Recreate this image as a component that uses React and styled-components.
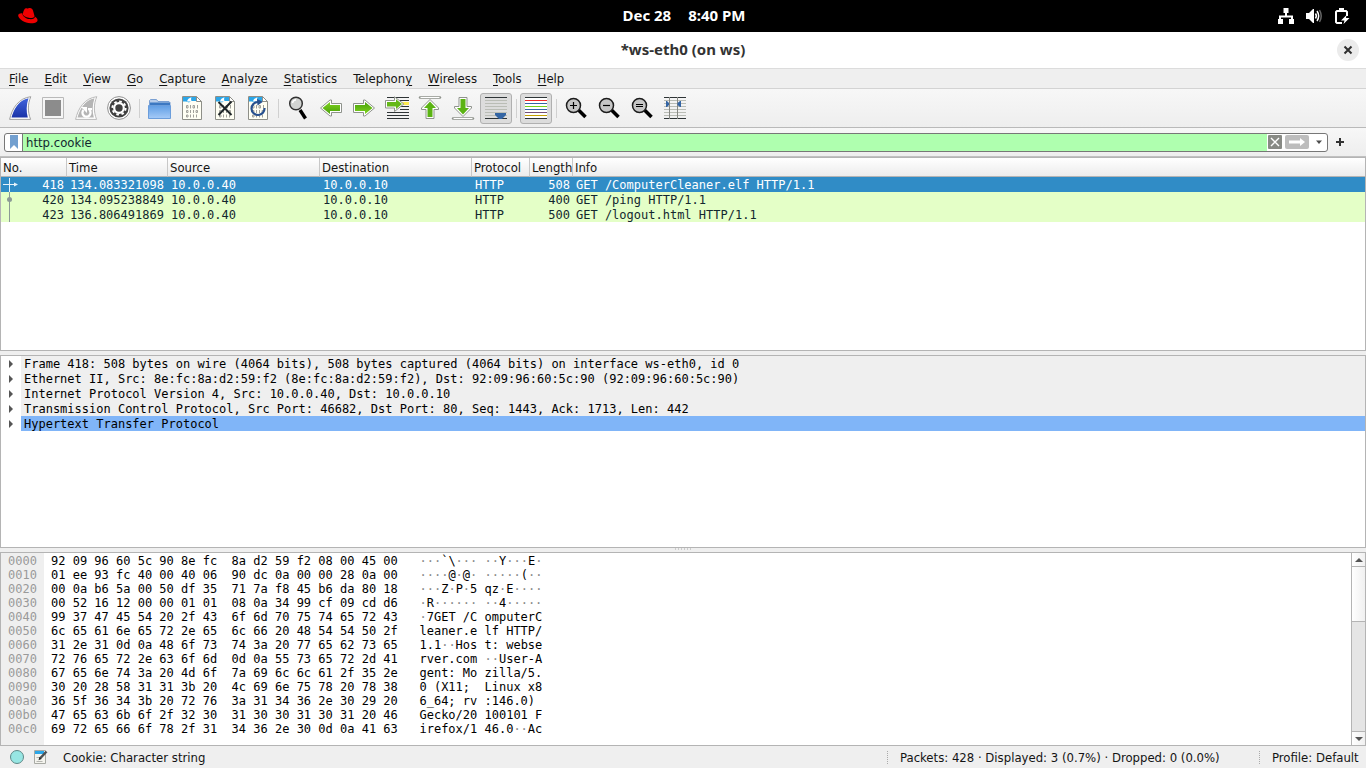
import React, { useState } from "react";
import styled, { createGlobalStyle, css } from "styled-components";

const menus = [
  ["", "F", "ile"],
  ["", "E", "dit"],
  ["", "V", "iew"],
  ["", "G", "o"],
  ["", "C", "apture"],
  ["", "A", "nalyze"],
  ["", "S", "tatistics"],
  ["Telephon", "y", ""],
  ["", "W", "ireless"],
  ["", "T", "ools"],
  ["", "H", "elp"],
];

const packets = [
  {
    no: 418,
    time: "134.083321098",
    length: 508,
    info: "GET /ComputerCleaner.elf HTTP/1.1",
    mark: "request",
  },
  {
    no: 420,
    time: "134.095238849",
    length: 400,
    info: "GET /ping HTTP/1.1",
    mark: "related",
  },
  {
    no: 423,
    time: "136.806491869",
    length: 500,
    info: "GET /logout.html HTTP/1.1",
    mark: "line",
  },
];

const details = [
  "Frame 418: 508 bytes on wire (4064 bits), 508 bytes captured (4064 bits) on interface ws-eth0, id 0",
  "Ethernet II, Src: 8e:fc:8a:d2:59:f2 (8e:fc:8a:d2:59:f2), Dst: 92:09:96:60:5c:90 (92:09:96:60:5c:90)",
  "Internet Protocol Version 4, Src: 10.0.0.40, Dst: 10.0.0.10",
  "Transmission Control Protocol, Src Port: 46682, Dst Port: 80, Seq: 1443, Ack: 1713, Len: 442",
  "Hypertext Transfer Protocol",
];

const dump = [
  "92 09 96 60 5c 90 8e fc 8a d2 59 f2 08 00 45 00",
  "01 ee 93 fc 40 00 40 06 90 dc 0a 00 00 28 0a 00",
  "00 0a b6 5a 00 50 df 35 71 7a f8 45 b6 da 80 18",
  "00 52 16 12 00 00 01 01 08 0a 34 99 cf 09 cd d6",
  "99 37 47 45 54 20 2f 43 6f 6d 70 75 74 65 72 43",
  "6c 65 61 6e 65 72 2e 65 6c 66 20 48 54 54 50 2f",
  "31 2e 31 0d 0a 48 6f 73 74 3a 20 77 65 62 73 65",
  "72 76 65 72 2e 63 6f 6d 0d 0a 55 73 65 72 2d 41",
  "67 65 6e 74 3a 20 4d 6f 7a 69 6c 6c 61 2f 35 2e",
  "30 20 28 58 31 31 3b 20 4c 69 6e 75 78 20 78 38",
  "36 5f 36 34 3b 20 72 76 3a 31 34 36 2e 30 29 20",
  "47 65 63 6b 6f 2f 32 30 31 30 30 31 30 31 20 46",
  "69 72 65 66 6f 78 2f 31 34 36 2e 30 0d 0a 41 63",
];

const toAscii = (bytes) =>
  bytes
    .map((b) => parseInt(b, 16))
    .map((n) => (n >= 32 && n < 127 ? String.fromCharCode(n) : "·"))
    .join("");

const Svg = ({ size = 24, children, ...rest }) => (
  <svg
    width={size}
    height={size}
    viewBox={`0 0 ${size} ${size}`}
    fill="none"
    aria-hidden="true"
    {...rest}
  >
    {children}
  </svg>
);

const Fin = ({ grey }) => (
  <Svg>
    <path
      d="M1.6 23.4C4 12.5 10.5 2 22.8.7 19.6 8 19.6 16 22.6 23.4Z"
      fill="#fff"
      stroke={grey ? "#b9b9b9" : "#a0a0a0"}
    />
    <path
      d="M3.500 21.400C6 12.500 11 4 20.500 2.200 18.200 9 18.200 15.500 19.800 21.400Z"
      fill={grey ? "#b5b5b5" : "url(#fin)"}
    />
    {grey ? (
      <>
        <path
          d="M9.500 12.500A4 4 0 1 0 15.500 12.500"
          stroke="#fff"
          strokeWidth="2.400"
          transform="translate(0 1.500)"
        />
        <path d="M7 11h6v6zM14 12h4v2.200h-4z" fill="#fff" />
      </>
    ) : (
      <defs>
        <linearGradient id="fin" x1="0" y1="0" x2="0" y2="1">
          <stop stopColor="#4063dc" />
          <stop offset="1" stopColor="#1a33a8" />
        </linearGradient>
      </defs>
    )}
  </Svg>
);

const Stop = () => (
  <Svg>
    <path d="M1.5 1.5h21v21h-21z" fill="#f6f6f6" stroke="#b9b9b9" />
    <path d="M4 4h16v16H4z" fill="#8c8c8c" />
  </Svg>
);

const Gear = () => (
  <Svg>
    <circle cx="12" cy="12" r="11.400" fill="#fff" stroke="#8f8f8f" />
    <circle cx="12" cy="12" r="9.600" fill="#404040" />
    <circle cx="12" cy="12" r="4.800" stroke="#fff" strokeWidth="2.200" />
    <circle
      cx="12"
      cy="12"
      r="6.600"
      stroke="#fff"
      strokeWidth="2"
      strokeDasharray="2.600 2.580"
    />
  </Svg>
);

const Folder = () => (
  <Svg>
    <defs>
      <linearGradient id="folder" x1="0" y1="0" x2="0" y2="1">
        <stop stopColor="#5f9de4" />
        <stop offset="1" stopColor="#a5caf7" />
      </linearGradient>
    </defs>
    <g transform="translate(1 0)">
      <path d="M1.500 7V4.500l1-1h6l1.500 2h11l1 1V9h-20.500z" fill="#b8cdea" stroke="#7ba0d2" />
      <path d="M2 6.500h20v3H2z" fill="#3c78c2" />
      <path d="M.5 9.500h22v13H.5z" fill="url(#folder)" stroke="#6b9ddb" />
    </g>
  </Svg>
);

const CaptureFile = ({ kind }) => (
  <Svg>
    <g transform="translate(1 0)">
      <path d="M1.500.500h14l5 5v18h-19z" fill="#fffff4" stroke="#8e8f88" />
      <path d="M2 1h13.300l2 4H10l-2 1.500L5 5.500H2z" fill="#2ba6e8" />
      <path d="M6 5.500C6.500 3.500 8 2 10.500 1.300 9.800 3 10 4.500 10.800 5.500z" fill="#fff" />
      <path d="M15.500.500v5h5z" fill="#fff" stroke="#8e8f88" />
      <path
        d="M5.500 9.500h1.500v2.500H5.500zM9.500 9v3.500M12 9.500h1.500v2.500H12zM16.500 9v3.500M5.500 14.500h1.500v2H5.500zM9.500 14v3M12.500 14v3M15 14.500h1.500v2H15zM5.500 19h1.500v2H5.500zM9.500 18.500v3M12.500 18.500v3M15.500 18.500v3"
        stroke="#a0a09a"
      />
      {kind === "close" && (
        <path d="M4.500 6l13 13M17.500 5.500l-13 13.500" stroke="#1f2629" strokeWidth="2" />
      )}
      {kind === "reload" && (
        <>
          <path
            d="M11 6A6.500 6.500 0 1 0 17.500 12"
            stroke="#27508e"
            strokeWidth="2.200"
          />
          <path d="M10 3l6 2.800-5.500 3.700z" fill="#27508e" />
        </>
      )}
    </g>
  </Svg>
);

const Magnifier = () => (
  <Svg>
    <path d="M14 14l5.500 8.500" stroke="#000" strokeWidth="3.400" />
    <circle cx="10" cy="7.500" r="6.300" fill="#d2d4d2" stroke="#333" strokeWidth="1.500" />
    <path d="M6.500 7c.3-2 1.500-3 3.500-3.300" stroke="#fff" strokeWidth="1.500" />
  </Svg>
);

const Lens = ({ sign }) => (
  <Svg>
    <path d="M14.500 14l7 7" stroke="#000" strokeWidth="3.600" />
    <circle cx="9.500" cy="9.500" r="7" fill="#c6c6c6" stroke="#1c1c1c" strokeWidth="1.500" />
    <path
      d={
        sign === "+"
          ? "M6 9.500h7M9.500 6v7"
          : sign === "-"
          ? "M6 9.500h7"
          : "M6 8.500h7M6 10.500h7"
      }
      stroke="#000"
      strokeWidth="1.200"
    />
  </Svg>
);

const Arrow = ({ turn = 0 }) => (
  <Svg>
    <defs>
      <linearGradient id="arrow" x1="0" y1="0" x2="0" y2="1">
        <stop stopColor="#7fd321" />
        <stop offset="1" stopColor="#4aa00a" />
      </linearGradient>
    </defs>
    <g transform={turn ? `rotate(${turn} 12 12)` : undefined}>
      <path
        d="M22.500 7.500v9h-10v3.500h-1.500L1.500 12l9.500-8h1.500v3.500z"
        fill="#fff"
        stroke="#8f938c"
      />
      <path d="M21 9v6H11v3L3.500 12 11 6v3z" fill="url(#arrow)" />
    </g>
  </Svg>
);

const GoTo = () => (
  <Svg>
    <path
      d="M2 1.500h22M15 4.500h9M2 16.500h22M2 19.500h22M2 22.500h22M15 10.500h9M15 13.500h9"
      stroke="#2e3436"
    />
    <path d="M17 6h7v3h-7z" fill="#fce94f" />
    <path
      d="M.500 4.500h9V.800L18.800 8l-9.300 7.500V12h-9z"
      fill="#fff"
      stroke="#8f938c"
    />
    <path d="M2 6h9V3.200L17 8l-6 5v-2.500H2z" fill="#64b818" />
  </Svg>
);

const EdgeArrow = ({ down }) => (
  <Svg>
    <g transform={down ? "rotate(180 12 12)" : undefined}>
      <path d="M2 1.500h20" stroke="#8f938c" strokeWidth="2.400" strokeLinecap="round" />
      <path d="M2.500 1.500h19" stroke="#fff" />
      <path
        d="M12 3.500L20.500 12v1.500H16v9H8v-9H3.500V12z"
        fill="#fff"
        stroke="#8f938c"
      />
      <path d="M12 5.500l6 6.500h-3.500v9h-5v-9H6z" fill="#5bb313" />
    </g>
  </Svg>
);

const AutoScroll = () => (
  <Svg>
    <path d="M1 1.500h22M1 22.500h22" stroke="#2e3436" />
    <path d="M1 4.500h22M1 7.500h22M1 10.500h22M1 13.500h22M1 16.500h22M1 19.500h22" stroke="#babdb6" />
    <path d="M11 17h11v2l-4 4h-3l-4-4z" fill="#3465a4" />
  </Svg>
);

const Colorize = () => (
  <Svg>
    {["#2e3436", "#ef2929", "#3465a4", "#73d216", "#3465a4", "#75507b", "#c4a000", "#2e3436"].map(
      (c, i) => (
        <React.Fragment key={i}>
          <path d={`M1 ${i * 3 + 1.5}h22`} stroke={c} />
          {i < 7 && <path d={`M1 ${i * 3 + 3}h22`} stroke="#fff" strokeWidth="2" />}
        </React.Fragment>
      )
    )}
  </Svg>
);

const ResizeColumns = () => (
  <Svg>
    <path d="M1 1.500h22M1 22.500h22" stroke="#2e3436" />
    <path d="M1 4.500h22M1 7.500h22M1 10.500h22M1 13.500h22M1 16.500h22M1 19.500h22" stroke="#babdb6" />
    <path d="M6.500 1v22M14.500 1v22" stroke="#888a85" />
    <path d="M3 5h1l2 2v2l-2 2H3zM18 5h-1l-2.500 2v2l2.500 2h1z" fill="#3465a4" />
  </Svg>
);

const toolGroups = [
  [
    ["Start capture", <Fin />],
    ["Stop capture", <Stop />],
    ["Restart capture", <Fin grey />],
    ["Capture options", <Gear />],
  ],
  [
    ["Open file", <Folder />],
    ["Save file", <CaptureFile />],
    ["Close file", <CaptureFile kind="close" />],
    ["Reload file", <CaptureFile kind="reload" />],
  ],
  [
    ["Find packet", <Magnifier />],
    ["Previous packet", <Arrow />],
    ["Next packet", <Arrow turn={180} />],
    ["Go to packet", <GoTo />],
    ["First packet", <EdgeArrow />],
    ["Last packet", <EdgeArrow down />],
    ["Auto scroll", <AutoScroll />, true],
  ],
  [["Colorize", <Colorize />, true]],
  [
    ["Zoom in", <Lens sign="+" />],
    ["Zoom out", <Lens sign="-" />],
    ["Normal size", <Lens sign="=" />],
    ["Resize columns", <ResizeColumns />],
  ],
];

const Marker = ({ mark }) => (
  <svg width="18" height="15" viewBox="0 0 18 15" fill="none" aria-hidden="true">
    {mark === "request" && (
      <>
        <path d="M8.500 1v14M2 7.500h12" stroke="#e6f2fa" />
        <path d="M13 5.500l4 2-4 2z" fill="#e6f2fa" />
      </>
    )}
    {mark === "related" && (
      <>
        <path d="M8.500 0v15" stroke="#8b9a96" />
        <circle cx="8.500" cy="7.500" r="2.500" fill="#8b9a96" />
      </>
    )}
    {mark === "line" && <path d="M8.500 0v15" stroke="#8b9a96" />}
  </svg>
);

const App = () => {
  const [filter, setFilter] = useState("http.cookie");
  return (
    <>
      <GlobalStyle />
      <Desktop>
        <TopBar>
          <Svg size={20}>
            <g transform="translate(0 2)" fill="#e00">
              <path d="M5.400 3.500c.6-1.500 1.200-3.800 3.200-3.300 1 .4 1.700.2 2.700-.2 1.700-.4 3.200.7 3.700 2.500l1.500 5.500c.1 2-3.500 2.300-5.700 1.800-3-.5-5.900-2-6.100-3.800z" />
              <path d="M4.300 5.200C1.500 5 0 6 .2 7.700c.4 3.300 6.500 7.300 12.500 7.500 4.500.2 7.200-1.300 6.800-3.500-.2-1.300-1.300-2.300-2.700-3.200.3 2-2.100 2.900-5.300 2.600-3.800-.4-7.200-3.100-7.200-5.900z" />
            </g>
          </Svg>
          <Clock>
            <span>Dec 28</span>
            <span>8:40 PM</span>
          </Clock>
          <Tray>
            <Svg size={16}>
              <path d="M5.500 0h5v5h-5zM0 11h5v5H0zM11 11h5v5h-5z" fill="#fff" />
              <path d="M8 4v4M2 11V8.500h12V11" stroke="#fff" strokeWidth="2" />
            </Svg>
            <Svg size={16}>
              <path d="M0 5h3l4-4h1v14H7l-4-4H0z" fill="#fff" />
              <path d="M9.500 5.500c1 1.500 1 3.500 0 5M11 3c2 3 2 7 0 10" stroke="#fff" strokeWidth="1.500" />
              <path d="M13.500 2c2 3.500 2 8.500 0 12" stroke="#666" strokeWidth="1.500" />
            </Svg>
            <Svg size={16}>
              <path d="M8 15H3l-1-1V4l1-1h9l1 1v4" stroke="#fff" strokeWidth="2" />
              <path d="M5 0h5v3H5zM12.500 7L7 12.500h3.500l-1 3.500 6-6h-3.500z" fill="#fff" />
            </Svg>
          </Tray>
        </TopBar>
        <TitleBar>
          <h1>*ws-eth0 (on ws)</h1>
          <CloseButton aria-label="Close">
            <Svg size={10}>
              <path d="M1.500 1.500l7 7M8.500 1.500l-7 7" stroke="#2e2e2e" strokeWidth="2" />
            </Svg>
          </CloseButton>
        </TitleBar>
        <MenuBar>
          {menus.map(([before, key, after]) => (
            <button key={before + key + after}>
              {before}
              <u>{key}</u>
              {after}
            </button>
          ))}
        </MenuBar>
        <Toolbar>
          {toolGroups.map((group, i) => (
            <React.Fragment key={i}>
              {i > 0 && <Separator />}
              {group.map(([label, icon, pressed]) => (
                <ToolButton key={label} aria-label={label} $pressed={pressed}>
                  {icon}
                </ToolButton>
              ))}
            </React.Fragment>
          ))}
        </Toolbar>
        <FilterBar>
          <FilterBox>
            <FilterButton $width={18} $divider aria-label="Bookmarks">
              <Svg size={14}>
                <path d="M3 0h8v14l-4-4-4 4z" fill="#729fcf" />
              </Svg>
            </FilterButton>
            <input
              aria-label="Display filter"
              value={filter}
              onChange={(e) => setFilter(e.target.value)}
            />
            <FilterButton $width={16} aria-label="Clear filter" onClick={() => setFilter("")}>
              <Svg size={14}>
                <rect width="14" height="14" rx="1" fill="#888a85" />
                <path d="M3 3l8 8M11 3l-8 8" stroke="#fff" strokeWidth="1.400" />
              </Svg>
            </FilterButton>
            <FilterButton $width={28} aria-label="Apply filter">
              <svg width="24" height="14" viewBox="0 0 24 14" aria-hidden="true">
                <rect width="24" height="14" rx="2" fill="#bdbdbd" />
                <path d="M4 5.500h11V3l5 4-5 4V8.500H4z" fill="#fff" />
              </svg>
            </FilterButton>
            <FilterButton $width={16} aria-label="Recent filters">
              <Svg size={8}>
                <path d="M1 2.500h6l-3 3.500z" fill="#4d4d4d" />
              </Svg>
            </FilterButton>
          </FilterBox>
          <FilterButton $width={24} aria-label="Add filter button">
            <Svg size={8}>
              <path d="M4 0v8M0 4h8" stroke="#333" strokeWidth="2" />
            </Svg>
          </FilterButton>
        </FilterBar>
        <Panels>
          <Panel $grow={194}>
            <PacketTable>
              <colgroup>
                {[66, 101, 152, 152, 58, 43].map((w, i) => (
                  <Col key={i} $width={w} />
                ))}
                <col />
              </colgroup>
              <thead>
                <tr>
                  {["No.", "Time", "Source", "Destination", "Protocol", "Length", "Info"].map(
                    (h) => (
                      <th key={h}>{h}</th>
                    )
                  )}
                </tr>
              </thead>
              <tbody>
                {packets.map((p, i) => (
                  <PacketRow key={p.no} $selected={i === 0}>
                    <MarkedCell>
                      <NumberCell>
                        <Marker mark={p.mark} />
                        <span>{p.no}</span>
                      </NumberCell>
                    </MarkedCell>
                    <td>{p.time}</td>
                    <td>10.0.0.40</td>
                    <td>10.0.0.10</td>
                    <td>HTTP</td>
                    <RightCell>{p.length}</RightCell>
                    <td>{p.info}</td>
                  </PacketRow>
                ))}
              </tbody>
            </PacketTable>
          </Panel>
          <Splitter />
          <Panel $grow={193}>
            <DetailTree>
              {details.map((d, i) => (
                <DetailRow key={d} $selected={i === 4}>
                  <Svg size={8}>
                    <path d="M2 0l4 4-4 4z" fill="#555" />
                  </Svg>
                  <span>{d}</span>
                </DetailRow>
              ))}
            </DetailTree>
          </Panel>
          <Splitter>
            <svg width="18" height="2" viewBox="0 0 18 2" aria-hidden="true">
              <path d="M1 1h17" stroke="#aaa" strokeDasharray="1 2" />
            </svg>
          </Splitter>
          <Panel $grow={194}>
            <HexView>
              <Offsets>
                {dump.map((_, i) => (
                  <HexLine key={i}>{(i * 16).toString(16).padStart(4, "0")}</HexLine>
                ))}
              </Offsets>
              <Bytes>
                {dump.map((line, i) => {
                  const b = line.split(" ");
                  const ascii = `${toAscii(b.slice(0, 8))} ${toAscii(b.slice(8))}`;
                  return (
                    <HexLine key={i}>
                      {`${b.slice(0, 8).join(" ")}  ${b.slice(8).join(" ")}   `}
                      {ascii
                        .split(/(·+)/)
                        .map((s, j) => (s[0] === "·" ? <Dim key={j}>{s}</Dim> : s))}
                    </HexLine>
                  );
                })}
              </Bytes>
              <ScrollBar>
                <ScrollButton aria-label="Scroll up">
                  <Svg size={8}>
                    <path d="M0 6l4-4 4 4z" fill="#555" />
                  </Svg>
                </ScrollButton>
                <Thumb />
                <Track />
                <ScrollButton $last aria-label="Scroll down">
                  <Svg size={8}>
                    <path d="M0 2l4 4 4-4z" fill="#555" />
                  </Svg>
                </ScrollButton>
              </ScrollBar>
            </HexView>
          </Panel>
        </Panels>
        <StatusBar>
          <Svg size={16}>
            <circle cx="8" cy="8" r="6.500" fill="#97e6e3" stroke="#5e8887" />
          </Svg>
          <Svg size={16}>
            <path d="M1.500 1.500h11v13h-11z" fill="#f4f4ee" stroke="#a8aaa4" />
            <path d="M2 2h9v3H2z" fill="#2ba6e8" />
            <path d="M3.500 8.500h5M3.500 12.500h6" stroke="#b5b5b0" />
            <path d="M13.500 2.500L7 9.500" stroke="#4d5052" strokeWidth="2.500" />
            <path d="M6.500 8l2 2-3 1.200z" fill="#222" />
          </Svg>
          <StatusText $grow>Cookie: Character string</StatusText>
          <Grip />
          <StatusText $width={355}>
            Packets: 428 · Displayed: 3 (0.7%) · Dropped: 0 (0.0%)
          </StatusText>
          <Grip />
          <StatusText $width={93}>Profile: Default</StatusText>
        </StatusBar>
      </Desktop>
    </>
  );
};

const GlobalStyle = createGlobalStyle`
  * {
    box-sizing: border-box;
  }
  body {
    margin: 0;
    font: 13px/18px "DejaVu Sans Condensed", "Noto Sans", sans-serif;
    color: #141414;
    background: #efefef;
  }
  button {
    display: flex;
    padding: 0;
    border: 0;
    background: none;
    font: inherit;
    color: inherit;
  }
  svg {
    display: block;
    flex: none;
  }
`;

const mono = css`
  font-family: "DejaVu Sans Mono", monospace;
  font-size: 12px;
`;

const shellFont = css`
  font-family: "Noto Sans", sans-serif;
  font-size: 15px;
  font-weight: 700;
`;

const Desktop = styled.div`
  display: flex;
  flex-direction: column;
  height: 100vh;
`;

const TopBar = styled.header`
  display: grid;
  grid-template-columns: 1fr auto 1fr;
  align-items: center;
  height: 32px;
  padding: 0 16px 0 18px;
  background: #000;
  color: #fff;
`;

const Clock = styled.div`
  ${shellFont}
  display: flex;
  gap: 17px;
  padding-bottom: 2px;
`;

const Tray = styled.div`
  display: flex;
  gap: 12px;
  justify-content: flex-end;
`;

const TitleBar = styled.div`
  display: grid;
  grid-template-columns: 1fr auto 1fr;
  align-items: center;
  height: 37px;
  padding: 0 7px;
  background: #fff;
  border-bottom: 1px solid #dcdcdc;
  h1 {
    ${shellFont}
    grid-column: 2;
    margin: 0;
    padding-bottom: 2px;
    color: #333;
  }
`;

const CloseButton = styled.button`
  justify-self: end;
  align-items: center;
  justify-content: center;
  width: 22px;
  height: 22px;
  border-radius: 50%;
  background: #ebebeb;
`;

const MenuBar = styled.nav`
  display: flex;
  height: 20px;
  padding: 0 1px;
  border-bottom: 1px solid #d3d3d3;
  button {
    display: block;
    padding: 1px 8px 0;
  }
  u {
    text-underline-offset: 2px;
    text-decoration-thickness: 1px;
  }
`;

const Toolbar = styled.div`
  display: flex;
  gap: 1px;
  padding: 4px 4px 3px;
  background: linear-gradient(#f7f7f7, #eee);
  border-bottom: 1px solid #b9b9b9;
`;

const ToolButton = styled.button`
  width: 32px;
  height: 31px;
  padding: 3px 4px;
  ${({ $pressed }) =>
    $pressed &&
    css`
      padding: 2px 3px;
      border: 1px solid #b0b0b0;
      border-radius: 3px;
      background: #dcdcdc;
    `}
`;

const Separator = styled.div`
  width: 6px;
  margin: 6px 0;
  background: linear-gradient(#d0d0d0, #d0d0d0) 3px 0 / 1px 100% no-repeat;
`;

const FilterBar = styled.div`
  display: flex;
  align-items: center;
  height: 29px;
  padding: 0 14px 0 4px;
  background: linear-gradient(#f7f7f7, #eee);
  border-bottom: 1px solid #c0c0c0;
`;

const FilterBox = styled.div`
  display: flex;
  flex: 1;
  height: 19px;
  background: #fff;
  border: 1px solid #777;
  border-radius: 3px;
  input {
    flex: 1;
    min-width: 0;
    padding: 1px 3px 0;
    border: 0;
    outline: 0;
    background: #afffaf;
    font: inherit;
    color: #12272e;
  }
`;

const FilterButton = styled.button`
  flex: none;
  align-items: center;
  justify-content: center;
  width: ${({ $width }) => $width}px;
  border-right: ${({ $divider }) => ($divider ? "1px solid #777" : "0")};
`;

const Panels = styled.main`
  display: flex;
  flex: 1;
  flex-direction: column;
  min-height: 0;
`;

const Panel = styled.section`
  flex: ${({ $grow }) => $grow} 1 0;
  min-height: 0;
  overflow: hidden;
  background: #fff;
  border: 1px solid #b4b4b4;
`;

const Splitter = styled.div`
  display: flex;
  flex: none;
  justify-content: center;
  height: 4px;
`;

const PacketTable = styled.table`
  width: 100%;
  table-layout: fixed;
  border-spacing: 0;
  th {
    height: 19px;
    padding: 2px 0 0 2px;
    overflow: hidden;
    font-weight: 400;
    line-height: 16px;
    text-align: left;
    white-space: nowrap;
    background: linear-gradient(#fff, #ececec);
    border-right: 1px solid #c8c8c8;
    border-bottom: 1px solid #b4b4b4;
  }
  th:last-child {
    border-right: 0;
  }
`;

const Col = styled.col`
  width: ${({ $width }) => $width}px;
`;

const PacketRow = styled.tr`
  color: ${({ $selected }) => ($selected ? "#fff" : "#12272e")};
  background: ${({ $selected }) => ($selected ? "#308cc6" : "#e4ffc7")};
  td {
    ${mono}
    height: 15px;
    padding: 1px 3px 0;
    line-height: 14px;
    white-space: nowrap;
  }
`;

const MarkedCell = styled.td`
  && {
    padding: 0 3px 0 0;
  }
`;

const NumberCell = styled.div`
  display: flex;
  justify-content: space-between;
  span {
    padding-top: 1px;
  }
`;

const RightCell = styled.td`
  text-align: right;
`;

const DetailTree = styled.ul`
  ${mono}
  margin: 0;
  padding: 0;
  list-style: none;
`;

const DetailRow = styled.li`
  display: flex;
  gap: 6px;
  padding-left: 6px;
  line-height: 14px;
  svg {
    margin-top: 4px;
  }
  span {
    flex: 1;
    padding: 1px 0 0 3px;
    white-space: nowrap;
    color: #000;
    background: ${({ $selected }) => ($selected ? "#80b5f8" : "#efefef")};
  }
`;

const HexView = styled.div`
  ${mono}
  display: flex;
  height: 100%;
  color: #000;
`;

const Offsets = styled.div`
  width: 43px;
  padding: 1px 0 0 7px;
  color: #9a9a9a;
  background: #efefef;
`;

const Bytes = styled.div`
  flex: 1;
  padding: 1px 0 0 7px;
`;

const HexLine = styled.div`
  line-height: 14px;
  white-space: pre;
`;

const Dim = styled.span`
  color: #8a8a8a;
`;

const ScrollBar = styled.div`
  display: flex;
  flex-direction: column;
  width: 14px;
  border-left: 1px solid #b4b4b4;
`;

const ScrollButton = styled.button`
  align-items: center;
  justify-content: center;
  height: 14px;
  background: linear-gradient(90deg, #fff, #f0f0f0);
  border: 0 solid #b4b4b4;
  border-width: ${({ $last }) => ($last ? "1px 0 0" : "0 0 1px")};
`;

const Thumb = styled.div`
  height: 55px;
  background: linear-gradient(90deg, #fff, #f0f0f0);
  border-bottom: 1px solid #b4b4b4;
`;

const Track = styled.div`
  flex: 1;
  background: #e5e5e5;
`;

const StatusBar = styled.footer`
  display: flex;
  align-items: center;
  gap: 8px;
  height: 22px;
  padding: 0 5px 0 9px;
  white-space: nowrap;
`;

const StatusText = styled.span`
  flex: ${({ $grow }) => ($grow ? 1 : "none")};
  min-width: ${({ $width }) => ($width ? `${$width}px` : "0")};
  padding-top: 2px;
  padding-left: ${({ $grow }) => ($grow ? 6 : 4)}px;
`;

const Grip = styled.span`
  height: 13px;
  border-left: 1px dotted #aaa;
`;

export default App;
